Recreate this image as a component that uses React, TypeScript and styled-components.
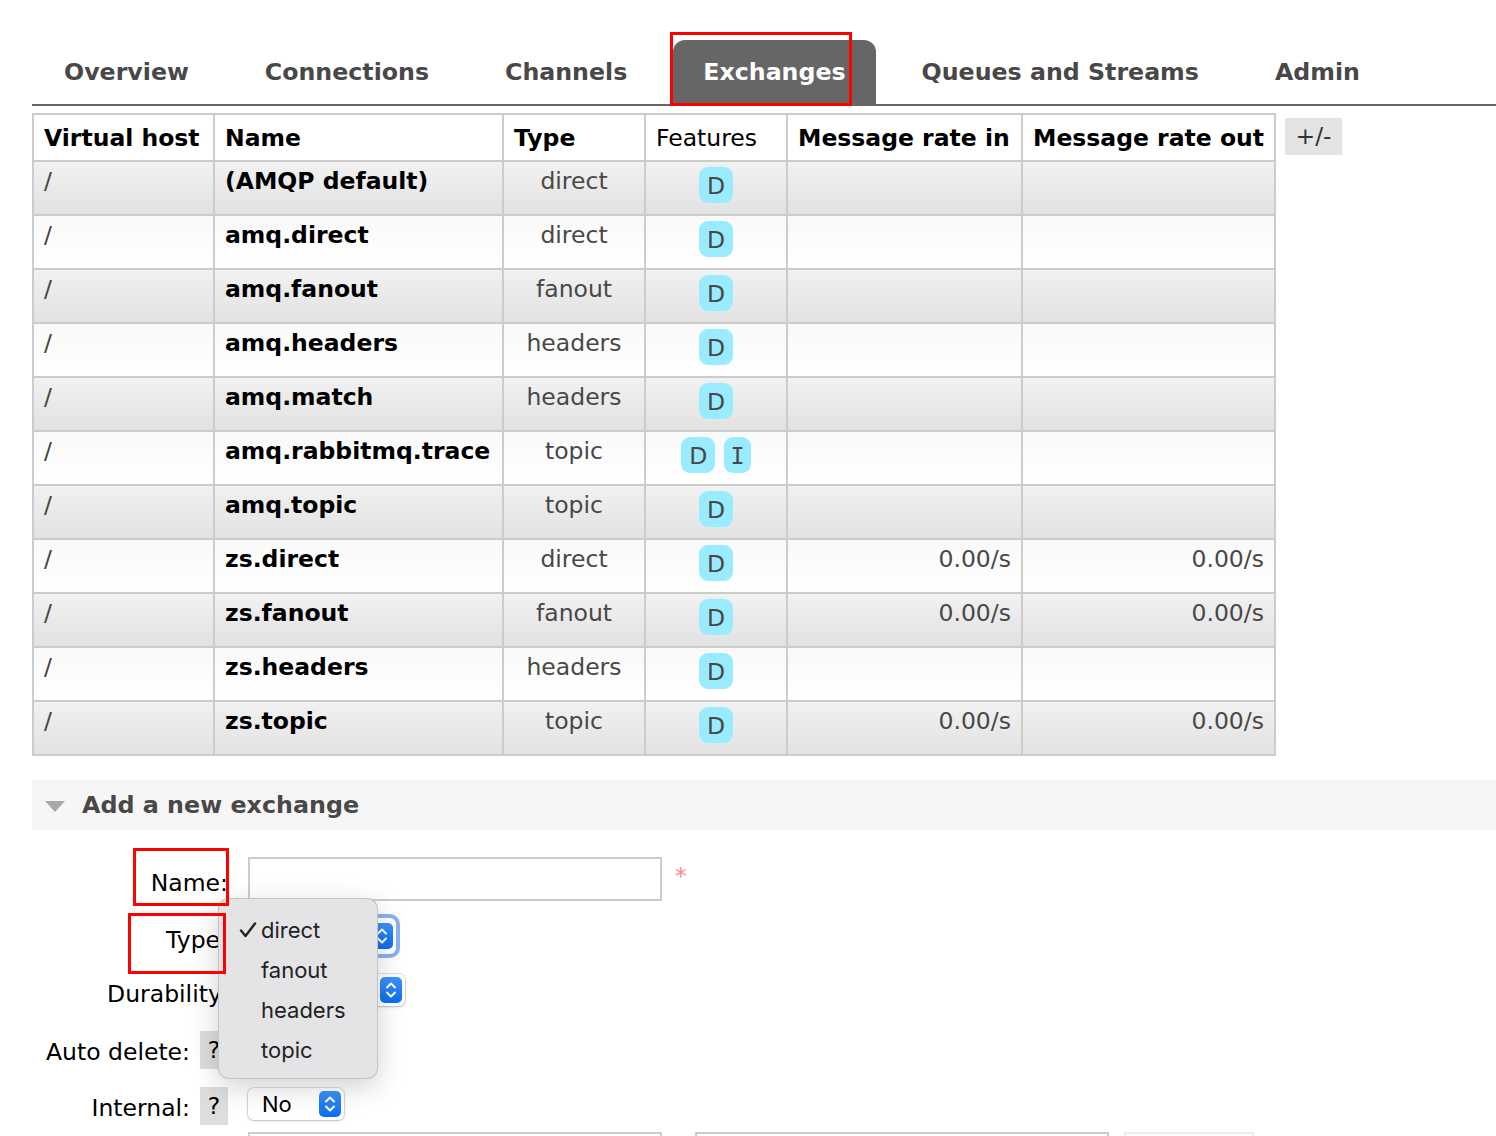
import React from "react";
import styled, { createGlobalStyle, css } from "styled-components";

const Global = createGlobalStyle`
  html, body { margin: 0; padding: 0; background: #fff; overflow: hidden; }
  body { font-family: "DejaVu Sans", Verdana, sans-serif; color: #484848; }
  #root { width: 1496px; height: 1136px; overflow: hidden; }
`;

const FS = "23.5px";

const Page = styled.div`
  padding: 40px 0 0 32px;
`;

const TabBar = styled.ul`
  list-style: none;
  margin: 0;
  padding: 0 0 0 2px;
  display: flex;
  gap: 16px;
  height: 64px;
  border-bottom: 2px solid #666;
`;

const Tab = styled.li<{ $active?: boolean }>`
  position: relative;
  padding: 0 30px;
  height: 64px;
  line-height: 64px;
  font-weight: bold;
  font-size: 23.7px;
  white-space: nowrap;
  color: ${(p) => (p.$active ? "#fff" : "#484848")};
  background: ${(p) => (p.$active ? "#666" : "transparent")};
  border-radius: 12px 12px 0 0;
`;

const Annotation = styled.span<{ $l: number; $t: number; $w: number; $h: number }>`
  position: absolute;
  left: ${(p) => p.$l}px;
  top: ${(p) => p.$t}px;
  width: ${(p) => p.$w}px;
  height: ${(p) => p.$h}px;
  box-sizing: border-box;
  border: 3px solid #f00;
  z-index: 5;
  pointer-events: none;
`;

const TableRow = styled.div`
  display: flex;
  align-items: flex-start;
  gap: 9px;
  margin-top: 7px;
`;

const Table = styled.table`
  border-collapse: collapse;
  table-layout: fixed;
  width: 1244px;
  font-size: ${FS};
`;

const Th = styled.th<{ $light?: boolean }>`
  border: 2px solid #ccc;
  padding: 0 10px;
  height: 45px;
  text-align: left;
  font-weight: ${(p) => (p.$light ? "normal" : "bold")};
  color: #000;
  background: #fff;
  white-space: nowrap;
`;

const Tr = styled.tr<{ $odd: boolean }>`
  td {
    background: ${(p) =>
      p.$odd
        ? "linear-gradient(#f1f1f1, #e2e2e2)"
        : "linear-gradient(#f9f9f9, #ffffff)"};
  }
`;

const Td = styled.td`
  border: 2px solid #ccc;
  padding: 0 10px;
  vertical-align: top;
`;

const Cell = styled.div<{ $align?: "left" | "center" | "right"; $bold?: boolean; $color?: string }>`
  height: 52px;
  box-sizing: border-box;
  padding-top: 5px;
  line-height: 28px;
  white-space: nowrap;
  text-align: ${(p) => p.$align || "left"};
  font-weight: ${(p) => (p.$bold ? "bold" : "normal")};
  color: ${(p) => p.$color || "#484848"};
`;

const BadgeCell = styled.div`
  height: 52px;
  box-sizing: border-box;
  padding-top: 5px;
  display: flex;
  justify-content: center;
  align-items: flex-start;
  gap: 9px;
`;

const Badge = styled.span<{ $mono?: boolean }>`
  display: inline-block;
  height: 36px;
  line-height: 38px;
  padding: 0 ${(p) => (p.$mono ? "6px" : "8px")};
  border-radius: 9px;
  background: #99ebff;
  color: #484848;
  font-size: ${FS};
  ${(p) =>
    p.$mono &&
    css`
      font-family: "DejaVu Sans Mono", monospace;
    `}
`;

const ToggleButton = styled.div`
  margin-top: 5px;
  width: 57px;
  height: 37px;
  line-height: 37px;
  text-align: center;
  background: #e4e4e4;
  color: #333;
  font-size: ${FS};
`;

const SectionHeader = styled.div`
  margin-top: 24px;
  height: 50px;
  background: #f6f6f6;
  display: flex;
  align-items: center;
  padding-left: 13px;
  gap: 17px;
  font-size: 23.8px;
  font-weight: bold;
  color: #484848;
`;

const Triangle = styled.span`
  width: 0;
  height: 0;
  border-left: 10.5px solid transparent;
  border-right: 10.5px solid transparent;
  border-top: 11px solid #a8a8a8;
  margin-top: 2px;
`;

const Form = styled.div`
  position: relative;
  padding-top: 16px;
  font-size: ${FS};
  color: #000;
`;

const FormRow = styled.div<{ $h: number; $top?: boolean }>`
  display: grid;
  grid-template-columns: 196px auto;
  column-gap: 20px;
  align-items: ${(p) => (p.$top ? "start" : "center")};
  height: ${(p) => p.$h}px;
`;

const LabelCell = styled.div`
  display: flex;
  justify-content: flex-end;
  align-items: center;
  gap: 10px;
  padding-top: 8px;
  white-space: nowrap;
`;

const Help = styled.span`
  display: inline-block;
  width: 28px;
  height: 38px;
  line-height: 38px;
  text-align: center;
  background: #ddd;
  margin-top: -4px;
`;

const Controls = styled.div`
  display: flex;
  align-items: center;
  gap: 13px;
`;

const TextInput = styled.div<{ $w: number; $faint?: boolean; $ml?: number }>`
  width: ${(p) => p.$w}px;
  height: 44px;
  box-sizing: border-box;
  margin-left: ${(p) => p.$ml || 0}px;
  border: 2px solid ${(p) => (p.$faint ? "#eee" : "#ccc")};
  background: #fff;
`;

const Required = styled.span`
  color: #f88;
  margin-top: -6px;
`;

const Select = styled.div<{ $w: number; $focus?: boolean }>`
  width: ${(p) => p.$w}px;
  height: ${(p) => (p.$focus ? 36 : 32)}px;
  box-sizing: border-box;
  display: flex;
  align-items: center;
  justify-content: space-between;
  padding: 0 3px 0 14px;
  background: #fff;
  border-radius: 6px;
  font-family: Inter, "Liberation Sans", sans-serif;
  font-size: 22px;
  color: #000;
  box-shadow: ${(p) =>
    p.$focus
      ? "0 0 0 4px rgba(100, 150, 240, 0.75)"
      : "0 0 0 1px rgba(0,0,0,0.10), 0 1px 3px rgba(0,0,0,0.18)"};
`;

const Stepper = styled.span`
  margin-left: auto;
  width: 22px;
  height: 26px;
  border-radius: 5px;
  background: linear-gradient(#3d92fa, #0b6df0);
  display: flex;
  align-items: center;
  justify-content: center;
`;

const Menu = styled.div`
  position: absolute;
  left: 186px;
  top: 68px;
  width: 160px;
  height: 181px;
  box-sizing: border-box;
  padding-top: 11px;
  background: #e4e4e7;
  border: 1px solid rgba(0, 0, 0, 0.14);
  border-radius: 11px;
  box-shadow: 0 8px 28px rgba(0, 0, 0, 0.18);
  z-index: 4;
  font-family: Inter, "Liberation Sans", sans-serif;
  font-size: 22px;
  color: #222;
`;

const MenuItem = styled.div`
  position: relative;
  height: 40px;
  line-height: 40px;
  padding-left: 42px;
`;

const Check = styled.svg`
  position: absolute;
  left: 20px;
  top: 11px;
`;

const StepperIcon = () => (
  <svg width="12" height="18" viewBox="0 0 12 18">
    <polyline points="2,6.5 6,2.5 10,6.5" fill="none" stroke="#fff" strokeWidth="2" strokeLinecap="round" strokeLinejoin="round" />
    <polyline points="2,11.5 6,15.5 10,11.5" fill="none" stroke="#fff" strokeWidth="2" strokeLinecap="round" strokeLinejoin="round" />
  </svg>
);

type Row = { name: string; type: string; features: string[]; rin?: string; rout?: string };

const rows: Row[] = [
  { name: "(AMQP default)", type: "direct", features: ["D"] },
  { name: "amq.direct", type: "direct", features: ["D"] },
  { name: "amq.fanout", type: "fanout", features: ["D"] },
  { name: "amq.headers", type: "headers", features: ["D"] },
  { name: "amq.match", type: "headers", features: ["D"] },
  { name: "amq.rabbitmq.trace", type: "topic", features: ["D", "I"] },
  { name: "amq.topic", type: "topic", features: ["D"] },
  { name: "zs.direct", type: "direct", features: ["D"], rin: "0.00/s", rout: "0.00/s" },
  { name: "zs.fanout", type: "fanout", features: ["D"], rin: "0.00/s", rout: "0.00/s" },
  { name: "zs.headers", type: "headers", features: ["D"] },
  { name: "zs.topic", type: "topic", features: ["D"], rin: "0.00/s", rout: "0.00/s" },
];

const tabs = ["Overview", "Connections", "Channels", "Exchanges", "Queues and Streams", "Admin"];

export default function App() {
  return (
    <>
      <Global />
      <Page>
        <TabBar>
          {tabs.map((t) => (
            <Tab key={t} $active={t === "Exchanges"}>
              {t}
              {t === "Exchanges" && <Annotation $l={-3} $t={-8} $w={182} $h={74} />}
            </Tab>
          ))}
        </TabBar>

        <TableRow>
          <Table>
            <colgroup>
              <col style={{ width: 181 }} />
              <col style={{ width: 289 }} />
              <col style={{ width: 142 }} />
              <col style={{ width: 142 }} />
              <col style={{ width: 235 }} />
              <col style={{ width: 253 }} />
            </colgroup>
            <thead>
              <tr>
                <Th>Virtual host</Th>
                <Th>Name</Th>
                <Th>Type</Th>
                <Th $light>Features</Th>
                <Th>Message rate in</Th>
                <Th>Message rate out</Th>
              </tr>
            </thead>
            <tbody>
              {rows.map((r, i) => (
                <Tr key={r.name} $odd={i % 2 === 0}>
                  <Td>
                    <Cell $color="#444">/</Cell>
                  </Td>
                  <Td>
                    <Cell $bold $color="#000">{r.name}</Cell>
                  </Td>
                  <Td>
                    <Cell $align="center">{r.type}</Cell>
                  </Td>
                  <Td>
                    <BadgeCell>
                      {r.features.map((f) => (
                        <Badge key={f} $mono={f === "I"}>{f}</Badge>
                      ))}
                    </BadgeCell>
                  </Td>
                  <Td>
                    <Cell $align="right">{r.rin || ""}</Cell>
                  </Td>
                  <Td>
                    <Cell $align="right">{r.rout || ""}</Cell>
                  </Td>
                </Tr>
              ))}
            </tbody>
          </Table>
          <ToggleButton>+/-</ToggleButton>
        </TableRow>

        <SectionHeader>
          <Triangle />
          Add a new exchange
        </SectionHeader>

        <Form>
          <FormRow $h={66}>
            <LabelCell>Name:</LabelCell>
            <Controls>
              <TextInput $w={414} />
              <Required>*</Required>
            </Controls>
          </FormRow>
          <FormRow $h={48}>
            <LabelCell>Type:</LabelCell>
            <Controls>
              <Select $w={148} $focus>
                <Stepper>
                  <StepperIcon />
                </Stepper>
              </Select>
            </Controls>
          </FormRow>
          <FormRow $h={60}>
            <LabelCell>Durability:</LabelCell>
            <Controls>
              <Select $w={157}>
                <Stepper>
                  <StepperIcon />
                </Stepper>
              </Select>
            </Controls>
          </FormRow>
          <FormRow $h={56}>
            <LabelCell>
              Auto delete: <Help>?</Help>
            </LabelCell>
            <Controls>
              <Select $w={96}>
                <Stepper>
                  <StepperIcon />
                </Stepper>
              </Select>
            </Controls>
          </FormRow>
          <FormRow $h={56}>
            <LabelCell>
              Internal: <Help>?</Help>
            </LabelCell>
            <Controls>
              <Select $w={96}>
                No
                <Stepper>
                  <StepperIcon />
                </Stepper>
              </Select>
            </Controls>
          </FormRow>
          <FormRow $h={60} $top>
            <LabelCell />
            <Controls>
              <TextInput $w={414} />
              <TextInput $w={414} $ml={20} />
              <TextInput $w={130} $faint $ml={2} />
            </Controls>
          </FormRow>

          <Menu>
            <MenuItem>
              <Check width="18" height="18" viewBox="0 0 18 18">
                <path d="M2 9.5 L6.5 15 L16 2.5" fill="none" stroke="#222" strokeWidth="2.4" strokeLinecap="round" strokeLinejoin="round" />
              </Check>
              direct
            </MenuItem>
            <MenuItem>fanout</MenuItem>
            <MenuItem>headers</MenuItem>
            <MenuItem>topic</MenuItem>
          </Menu>
          <Annotation $l={101} $t={18} $w={96} $h={58} />
          <Annotation $l={96} $t={83} $w={98} $h={61} />
        </Form>
      </Page>
    </>
  );
}
